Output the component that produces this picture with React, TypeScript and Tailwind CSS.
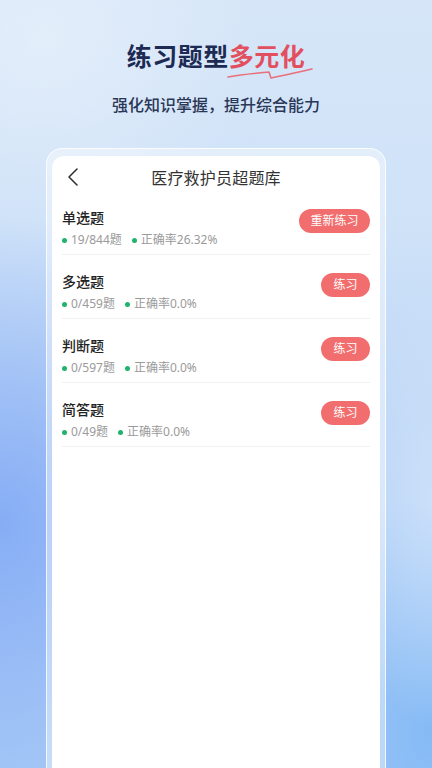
import React from "react";

const rows = [
  { title: "单选题", count: "19/844题", rate: "正确率26.32%", btn: "重新练习" },
  { title: "多选题", count: "0/459题", rate: "正确率0.0%", btn: "练习" },
  { title: "判断题", count: "0/597题", rate: "正确率0.0%", btn: "练习" },
  { title: "简答题", count: "0/49题", rate: "正确率0.0%", btn: "练习" },
];

function Dot() {
  return <span className="inline-block w-[5px] h-[5px] rounded-full bg-[#1fb36b] mr-[4px]" />;
}

export default function App() {
  return (
    <div
      className="relative w-[432px] h-[768px] overflow-hidden flex flex-col items-center"
      style={{ fontFamily: '"Noto Sans", "Noto Sans CJK SC", sans-serif' }}
    >
      <div className="absolute inset-0 bg-[linear-gradient(180deg,#d6e6f8_0%,#cfe2f8_30%,#bcd6f6_55%,#a9cbf6_100%)]" />
      <div className="absolute inset-0 bg-[radial-gradient(ellipse_60%_40%_at_0%_68%,rgba(118,160,245,0.75),transparent_100%)]" />
      <div className="absolute inset-0 bg-[radial-gradient(ellipse_40%_30%_at_100%_95%,rgba(120,180,245,0.75),transparent_100%)]" />
      <div className="absolute inset-0 bg-[radial-gradient(ellipse_50%_25%_at_10%_5%,rgba(232,241,251,0.7),transparent_100%)]" />
      <div className="absolute inset-0 bg-[radial-gradient(ellipse_20%_30%_at_100%_65%,rgba(215,232,252,0.6),transparent_100%)]" />

      <div className="relative mt-[37px] h-[40px] flex items-center">
        <span className="text-[25px] font-bold text-[#1d2b54] tracking-[0.5px]">练习题型</span>
        <span className="relative text-[25px] font-bold text-[#e2505f] tracking-[0.5px]">
          多元化
          <svg className="absolute left-[-2px] top-[29px]" width="86" height="14" viewBox="0 0 86 14">
            <path
              d="M1 10 C 18 7, 32 6, 42 5 L 44 11 C 58 8, 72 5, 85 2"
              fill="none"
              stroke="#e8707d"
              strokeWidth="1.6"
              strokeLinecap="round"
              strokeLinejoin="round"
            />
          </svg>
        </span>
      </div>

      <div className="relative mt-[16px] text-[16px] font-medium text-[#2a3756] leading-[24px]">
        强化知识掌握，提升综合能力
      </div>

      <div className="relative mt-[31px] w-[340px] flex-1 rounded-t-[16px] bg-white/40 border border-white/80 border-b-0 pt-[7px] px-[5px]">
        <div className="h-full rounded-t-[12px] bg-white">
          <div className="relative h-[44px] flex items-center justify-center">
            <svg className="absolute left-[14px] top-[11px]" width="14" height="20" viewBox="0 0 14 20">
              <path d="M11 2 L3 10 L11 18" fill="none" stroke="#333" strokeWidth="1.6" strokeLinecap="round" strokeLinejoin="round" />
            </svg>
            <span className="text-[16px] text-[#333] tracking-[0.2px]">医疗救护员超题库</span>
          </div>
          <div className="px-[10px]">
            {rows.map((r, i) => (
              <div
                key={r.title}
                className={`flex items-center justify-between border-b border-[#f1f1f1] pb-[6px] ${i === 0 ? "pt-[8px]" : "pt-[17px]"}`}
              >
                <div className="flex flex-col">
                  <div className="h-[20px] leading-[20px] text-[14px] font-medium text-[#222]">{r.title}</div>
                  <div className="mt-[4px] h-[16px] flex items-center text-[12px] text-[#9a9a9a] leading-[16px]">
                    <Dot />
                    <span>{r.count}</span>
                    <span className="ml-[10px] flex items-center">
                      <Dot />
                      {r.rate}
                    </span>
                  </div>
                </div>
                <div
                  className={`h-[24px] rounded-full bg-[#f26e6e] text-white text-[12px] flex items-center justify-center mb-[14px] ${r.btn.length > 2 ? "w-[71px]" : "w-[49px]"}`}
                >
                  {r.btn}
                </div>
              </div>
            ))}
          </div>
        </div>
      </div>
    </div>
  );
}
